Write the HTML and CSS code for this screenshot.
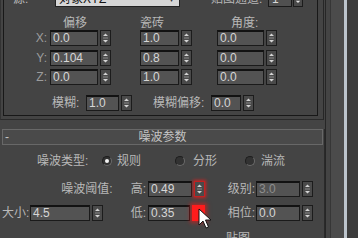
FILE: index.html
```html
<!DOCTYPE html>
<html>
<head>
<meta charset="utf-8">
<link rel="stylesheet" href="styles.css">
</head>
<body>
<div class="screen">
  <div class="main">
    <div class="rollout1">
      <div class="group">
        <div class="toprow">
          <span></span>
          <span class="lbl">源:</span>
          <div class="dropdown">对象XYZ<span class="ddarrow">▾</span></div>
          <span></span>
          <span class="lbl">贴图通道:</span>
          <div class="chbox"><span class="chval">1</span><span class="charrow"><svg width="9" height="14" viewBox="0 0 9 14"><path d="M2 9 L4.5 11.5 L7 9 Z" fill="#e0e0e0"/></svg></span></div>
        </div>

        <div class="vgrid heads">
          <span></span>
          <span class="h h1">偏移</span>
          <span></span>
          <span class="h h2">瓷砖</span>
          <span></span>
          <span class="h h3">角度:</span>
        </div>

        <div class="vgrid vrow">
          <span class="axis">X:</span>
          <div class="spin"><div class="inp">0.0</div><div class="spn"><svg width="9" height="14" viewBox="0 0 9 14"><path d="M2 5 L4.5 2.5 L7 5 Z M2 9 L4.5 11.5 L7 9 Z" fill="#d4d4d4"/><path d="M2 7 H7" stroke="#8a8a8a" stroke-width="1"/></svg></div></div>
          <span></span>
          <div class="spin"><div class="inp">1.0</div><div class="spn"><svg width="9" height="14" viewBox="0 0 9 14"><path d="M2 5 L4.5 2.5 L7 5 Z M2 9 L4.5 11.5 L7 9 Z" fill="#d4d4d4"/><path d="M2 7 H7" stroke="#8a8a8a" stroke-width="1"/></svg></div></div>
          <span></span>
          <div class="spin"><div class="inp">0.0</div><div class="spn"><svg width="9" height="14" viewBox="0 0 9 14"><path d="M2 5 L4.5 2.5 L7 5 Z M2 9 L4.5 11.5 L7 9 Z" fill="#d4d4d4"/><path d="M2 7 H7" stroke="#8a8a8a" stroke-width="1"/></svg></div></div>
        </div>

        <div class="vgrid vrow r2">
          <span class="axis">Y:</span>
          <div class="spin"><div class="inp">0.104</div><div class="spn"><svg width="9" height="14" viewBox="0 0 9 14"><path d="M2 5 L4.5 2.5 L7 5 Z M2 9 L4.5 11.5 L7 9 Z" fill="#d4d4d4"/><path d="M2 7 H7" stroke="#8a8a8a" stroke-width="1"/></svg></div></div>
          <span></span>
          <div class="spin"><div class="inp">0.8</div><div class="spn"><svg width="9" height="14" viewBox="0 0 9 14"><path d="M2 5 L4.5 2.5 L7 5 Z M2 9 L4.5 11.5 L7 9 Z" fill="#d4d4d4"/><path d="M2 7 H7" stroke="#8a8a8a" stroke-width="1"/></svg></div></div>
          <span></span>
          <div class="spin"><div class="inp">0.0</div><div class="spn"><svg width="9" height="14" viewBox="0 0 9 14"><path d="M2 5 L4.5 2.5 L7 5 Z M2 9 L4.5 11.5 L7 9 Z" fill="#d4d4d4"/><path d="M2 7 H7" stroke="#8a8a8a" stroke-width="1"/></svg></div></div>
        </div>

        <div class="vgrid vrow r3">
          <span class="axis">Z:</span>
          <div class="spin"><div class="inp">0.0</div><div class="spn"><svg width="9" height="14" viewBox="0 0 9 14"><path d="M2 5 L4.5 2.5 L7 5 Z M2 9 L4.5 11.5 L7 9 Z" fill="#d4d4d4"/><path d="M2 7 H7" stroke="#8a8a8a" stroke-width="1"/></svg></div></div>
          <span></span>
          <div class="spin"><div class="inp">1.0</div><div class="spn"><svg width="9" height="14" viewBox="0 0 9 14"><path d="M2 5 L4.5 2.5 L7 5 Z M2 9 L4.5 11.5 L7 9 Z" fill="#d4d4d4"/><path d="M2 7 H7" stroke="#8a8a8a" stroke-width="1"/></svg></div></div>
          <span></span>
          <div class="spin"><div class="inp">0.0</div><div class="spn"><svg width="9" height="14" viewBox="0 0 9 14"><path d="M2 5 L4.5 2.5 L7 5 Z M2 9 L4.5 11.5 L7 9 Z" fill="#d4d4d4"/><path d="M2 7 H7" stroke="#8a8a8a" stroke-width="1"/></svg></div></div>
        </div>

        <div class="blurrow">
          <span></span>
          <span class="lbl">模糊:</span>
          <div class="spin"><div class="inp">1.0</div><div class="spn"><svg width="9" height="14" viewBox="0 0 9 14"><path d="M2 5 L4.5 2.5 L7 5 Z M2 9 L4.5 11.5 L7 9 Z" fill="#d4d4d4"/><path d="M2 7 H7" stroke="#8a8a8a" stroke-width="1"/></svg></div></div>
          <span></span>
          <span class="lbl">模糊偏移:</span>
          <div class="spin"><div class="inp">0.0</div><div class="spn"><svg width="9" height="14" viewBox="0 0 9 14"><path d="M2 5 L4.5 2.5 L7 5 Z M2 9 L4.5 11.5 L7 9 Z" fill="#d4d4d4"/><path d="M2 7 H7" stroke="#8a8a8a" stroke-width="1"/></svg></div></div>
        </div>
      </div>
    </div>

    <div class="rollout2">
      <div class="titlebar">
        <span class="minus">-</span>
        <span class="ttl">噪波参数</span>
        <span></span>
      </div>

      <div class="typerow">
        <span></span>
        <span class="lbl">噪波类型:</span>
        <span class="radio on"></span>
        <span class="lbl">规则</span>
        <span class="radio"></span>
        <span class="lbl">分形</span>
        <span class="radio"></span>
        <span class="lbl">湍流</span>
      </div>

      <div class="ngrid nrow1">
        <div class="thr"><span class="lbl">噪波阈值:</span><span class="lbl hi">高:</span></div>
        <div class="spin"><div class="inp">0.49</div><div class="spn glow"><svg width="9" height="14" viewBox="0 0 9 14"><path d="M2 5 L4.5 2.5 L7 5 Z M2 9 L4.5 11.5 L7 9 Z" fill="#d4d4d4"/><path d="M2 7 H7" stroke="#8a8a8a" stroke-width="1"/></svg></div></div>
        <span class="lbl rlbl">级别:</span>
        <div class="spin"><div class="inp dis">3.0</div><div class="spn"><svg width="9" height="14" viewBox="0 0 9 14"><path d="M2 5 L4.5 2.5 L7 5 Z M2 9 L4.5 11.5 L7 9 Z" fill="#d4d4d4"/><path d="M2 7 H7" stroke="#8a8a8a" stroke-width="1"/></svg></div></div>
      </div>

      <div class="ngrid nrow2">
        <span class="lbl size">大小:</span>
        <div class="spin"><div class="inp">4.5</div><div class="spn"><svg width="9" height="14" viewBox="0 0 9 14"><path d="M2 5 L4.5 2.5 L7 5 Z M2 9 L4.5 11.5 L7 9 Z" fill="#d4d4d4"/><path d="M2 7 H7" stroke="#8a8a8a" stroke-width="1"/></svg></div></div>
        <span class="lbl rlbl lo">低:</span>
        <div class="spin"><div class="inp">0.35</div><div class="redsq"></div></div>
        <span class="lbl rlbl">相位:</span>
        <div class="spin"><div class="inp">0.0</div><div class="spn"><svg width="9" height="14" viewBox="0 0 9 14"><path d="M2 5 L4.5 2.5 L7 5 Z M2 9 L4.5 11.5 L7 9 Z" fill="#d4d4d4"/><path d="M2 7 H7" stroke="#8a8a8a" stroke-width="1"/></svg></div></div>
      </div>

      <div class="maprow"><span class="lbl">贴图</span></div>
    </div>

    <svg class="cursor" width="14" height="22" viewBox="0 0 14 22"><path d="M1 1 L1 17 L5 13 L8 20 L10.5 19 L7.5 12 L13 12 Z" fill="#ffffff" stroke="#111" stroke-width="1" stroke-linejoin="round"/></svg>
  </div>
  <div class="scroll">
    <span class="s1"></span><span class="s2"></span><span class="s3"></span><span class="s4"></span><span class="s5"></span><span class="s6"></span>
  </div>
</div>
</body>
</html>
```

FILE: styles.css
```css
* { box-sizing: border-box; }
html, body { margin: 0; padding: 0; }
body {
  width: 358px;
  height: 238px;
  overflow: hidden;
  background: #444444;
  font-family: "Liberation Sans", "Noto Sans CJK SC", sans-serif;
  font-size: 12px;
  color: #b8b8b8;
}
.screen { display: flex; width: 358px; height: 238px; overflow: hidden; }
.main { width: 325px; flex: none; position: relative; }

.lbl { white-space: nowrap; line-height: 16px; }

/* first rollout */
.rollout1 {
  width: 324px;
  border-left: 1px solid #333;
  border-right: 1px solid #262626;
  border-bottom: 1px solid #2a2a2a;
  padding-left: 2px;
  padding-bottom: 3px;
}
.group {
  display: flow-root;
  width: 315px;
  border-left: 1px solid #181818;
  border-right: 1px solid #181818;
  border-bottom: 1px solid #181818;
  padding-bottom: 4px;
}
.toprow {
  display: grid;
  grid-template-columns: 9px 42px 125px 31px 57px 35px;
  height: 16px;
  margin-top: -9px;
  align-items: stretch;
}
.dropdown {
  position: relative;
  background: #d6d6d6;
  color: #141414;
  border: 1px solid #222;
  padding-left: 3px;
  line-height: 14px;
}
.ddarrow { position: absolute; right: 5px; top: 0; color: #333; font-size: 10px; }
.chbox { display: flex; gap: 1px; }
.chval {
  flex: 1;
  background: #505050;
  border: 1px solid #1a1a1a;
  color: #d8d8d8;
  padding-left: 3px;
  line-height: 14px;
}
.charrow {
  width: 10px;
  background: #4a4a4a;
  border: 1px solid #1c1c1c;
  display: flex;
}

.vgrid {
  display: grid;
  grid-template-columns: 46px 61px 29px 52px 25px 60px;
}
.heads { margin-top: 9px; height: 14px; }
.h { line-height: 14px; white-space: nowrap; }
.h1 { padding-left: 13px; }
.h2 { padding-left: 0; }
.h3 { padding-left: 14px; }
.vrow { height: 16px; }
.r2 { margin-top: 4px; }
.r3 { margin-top: 3px; }
.axis { text-align: right; padding-right: 3px; line-height: 16px; color: #9c9c9c; }

.spin { display: flex; gap: 2px; height: 16px; }
.inp {
  flex: 1;
  min-width: 0;
  background: #535353;
  border: 1px solid #1a1a1a;
  border-top: 2px solid #121212;
  color: #d6d6d6;
  padding-left: 2px;
  line-height: 12px;
  white-space: nowrap;
  overflow: hidden;
}
.inp.dis { color: #8e8e8e; }
.spn {
  width: 11px;
  flex: none;
  background: #4a4a4a;
  border: 1px solid #1c1c1c;
  display: flex;
}
.spn svg { display: block; }
.spn.glow {
  border-color: #c42020;
  box-shadow: 0 0 3px 1px rgba(230, 30, 30, 0.8);
}
.redsq {
  width: 13px;
  flex: none;
  background: #ff1c1c;
  box-shadow: 0 0 4px 2px rgba(255, 20, 20, 0.55);
}

.blurrow {
  display: grid;
  grid-template-columns: 48px 34px 46px 21px 58px 43px;
  margin-top: 10px;
  height: 16px;
}

/* second rollout */
.rollout2 {
  width: 325px;
  margin-top: 17px;
  border-right: 1px solid #2a2a2a;
  height: 120px;
}
.titlebar {
  margin-top: -8px;
  margin-left: 2px;
  width: 321px;
  height: 16px;
  border: 1px solid #686868;
  background: #4a4a4a;
  display: grid;
  grid-template-columns: 1fr auto 1fr;
  line-height: 14px;
  color: #c4c4c4;
}
.minus { padding-left: 2px; }
.ttl { white-space: nowrap; }

.typerow {
  display: grid;
  grid-template-columns: 37px 65px 15px 58px 18px 52px 16px auto;
  margin-top: 9px;
  height: 14px;
  align-items: center;
}
.typerow .lbl { line-height: 14px; }
.radio {
  width: 10px;
  height: 10px;
  border-radius: 50%;
  background: #323232;
  border: 1px solid;
  border-color: #1e1e1e #6a6a6a #6a6a6a #1e1e1e;
  display: flex;
  align-items: center;
  justify-content: center;
}
.radio.on::after {
  content: "";
  width: 4px;
  height: 4px;
  border-radius: 50%;
  background: #f2f2f2;
}

.ngrid {
  display: grid;
  grid-template-columns: 30px 73px 45px 57px 51px 57px;
  height: 16px;
}
.nrow1 { margin-top: 13px; }
.nrow2 { margin-top: 8px; }
.thr {
  grid-column: 1 / 4;
  display: flex;
  justify-content: flex-end;
  padding-right: 2px;
}
.thr .lbl:first-child { margin-right: 18px; }
.rlbl { text-align: right; padding-right: 1px; }
.lo { padding-right: 2px; }
.size { padding-left: 2px; }
.maprow { margin-top: 10px; padding-left: 226px; height: 14px; }
.maprow .lbl { line-height: 14px; }

.cursor { position: absolute; left: 198px; top: 208px; }

/* right strip */
.scroll { flex: 1; display: flex; height: 238px; }
.s1 { width: 1px; background: #262626; }
.s2 { width: 4px; background: #444; }
.s3 { width: 1px; background: #363636; }
.s4 { width: 13px; background: #4b4b4b; }
.s5 { width: 3px; background: #bcc4cc; }
.s6 { width: 11px; background: #3c3c3c; }
```
